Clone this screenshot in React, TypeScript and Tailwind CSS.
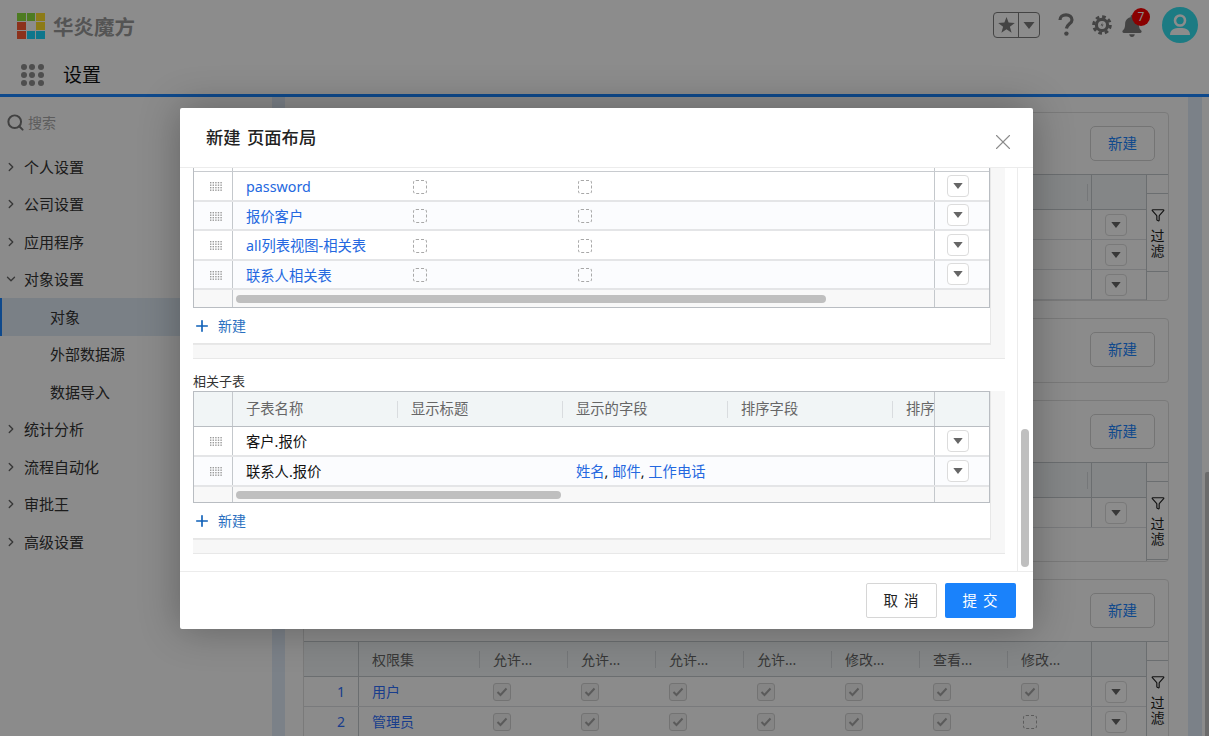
import { ChevronDown, ChevronRight, Funnel, Plus, Search, X } from "lucide-react"
import { FaBell } from "react-icons/fa"

const menu = [
  { label: "个人设置" },
  { label: "公司设置" },
  { label: "应用程序" },
  { label: "对象设置", open: true },
  { label: "对象", sub: true, active: true },
  { label: "外部数据源", sub: true },
  { label: "数据导入", sub: true },
  { label: "统计分析" },
  { label: "流程自动化" },
  { label: "审批王" },
  { label: "高级设置" },
]

const logoColors = [
  "#8ce03c", "#8ce03c", "#ffe02a",
  "#ff5b33", "#ffffff", "#ffe02a",
  "#ff5b33", "#18d8ff", "#18d8ff",
]

const permissionColumns = ["允许...", "允许...", "允许...", "允许...", "修改...", "查看...", "修改..."]

function Caret({ className = "" }: { className?: string }) {
  return (
    <svg width="12" height="7" viewBox="0 0 11 7" className={className}>
      <polygon points="0,0 11,0 5.5,7" fill="currentColor" />
    </svg>
  )
}

function RowMenu() {
  return (
    <div className="flex h-[22px] w-[22px] items-center justify-center rounded-[4px] border border-[#dcdcdc] bg-white text-[#666]">
      <Caret className="h-[6px] w-[10px]" />
    </div>
  )
}

function DashedBox() {
  return <div className="h-[14px] w-[14px] rounded-[3px] border border-dashed border-[#a8a8a8]" />
}

function CheckedBox() {
  return (
    <div className="flex h-[18px] w-[18px] items-center justify-center rounded-[3px] border border-[#d2d2d2] bg-[#f2f2f2]">
      <svg width="12" height="10" viewBox="0 0 12 10" fill="none" stroke="#a6a6a6" strokeWidth="2">
        <path d="M1.5 5 L4.5 8 L10.5 1.5" />
      </svg>
    </div>
  )
}

function DragHandle() {
  return (
    <svg width="12" height="9" viewBox="0 0 12 9" fill="#9a9a9a">
      {[0, 1, 2, 3].map((r) =>
        [0, 1, 2, 3, 4].map((c) => (
          <rect key={`${r}-${c}`} x={c * 2.6} y={r * 2.5} width="1.4" height="1.4" />
        )),
      )}
    </svg>
  )
}

function GearIcon() {
  return (
    <svg width="20" height="20" viewBox="0 0 20 20" fill="none">
      <circle cx="10" cy="10" r="8.3" stroke="#7c7c7c" strokeWidth="3" strokeDasharray="3.6 2.9" />
      <circle cx="10" cy="10" r="5.6" stroke="#7c7c7c" strokeWidth="3.2" />
      <path d="M10.8 7 L8.6 10.4 H10.4 L9.4 13 L11.6 9.6 H9.9 Z" fill="#7c7c7c" />
    </svg>
  )
}

function AvatarIcon() {
  return (
    <div className="flex h-[36px] w-[36px] items-center justify-center rounded-full bg-[#33e0ee]">
      <svg width="24" height="24" viewBox="0 0 24 24" fill="#ffffff">
        <circle cx="12" cy="7.5" r="5" fill="none" stroke="#ffffff" strokeWidth="2.6" />
        <path d="M2 22 C2 16.8 6 15 12 15 C18 15 22 16.8 22 22 Z" />
      </svg>
    </div>
  )
}

function TopBar() {
  return (
    <div className="flex h-[60px] shrink-0 items-start bg-white pl-[17px] pr-[11px] pt-[7px]">
      <div className="mt-[6px] grid h-[26px] w-[28px] grid-cols-3 grid-rows-3 gap-px">
        {logoColors.map((color, i) => (
          <div key={i} style={{ backgroundColor: color }} />
        ))}
      </div>
      <span className="ml-[8px] mt-[5px] text-[20.5px] leading-[30px] font-bold text-[#999]">华炎魔方</span>
      <div className="ml-auto mt-[5px] flex h-[26px] w-[47px] items-center rounded-[4px] border border-[#7c7c7c] text-[#7c7c7c]">
        <div className="flex h-full w-[25px] items-center justify-center border-r border-[#7c7c7c]">
          <svg width="17" height="16" viewBox="0 0 17 16" fill="currentColor">
            <polygon points="8.5,0 10.6,5.6 16.8,5.9 11.9,9.7 13.6,15.8 8.5,12.3 3.4,15.8 5.1,9.7 0.2,5.9 6.4,5.6" />
          </svg>
        </div>
        <div className="flex flex-1 items-center justify-center">
          <Caret />
        </div>
      </div>
      <svg width="18" height="24" viewBox="0 0 18 24" fill="none" className="ml-[17px] mt-[6px]">
        <path d="M3 7 C3 3.6 5.6 1.8 9 1.8 C12.4 1.8 15 3.8 15 7 C15 10.6 10 11 9.4 15.5" stroke="#7c7c7c" strokeWidth="3.2" />
        <circle cx="9.4" cy="20.6" r="2.2" fill="#7c7c7c" />
      </svg>
      <div className="ml-[17px] mt-[8px]">
        <GearIcon />
      </div>
      <div className="relative ml-[9px] mt-[8px] text-[#7c7c7c]">
        <FaBell size={22} />
        <div className="absolute left-[11px] top-[-7px] flex h-[18px] w-[18px] items-center justify-center rounded-full bg-[#fb0000] text-[12px] leading-none text-white">
          7
        </div>
      </div>
      <div className="ml-[19px]">
        <AvatarIcon />
      </div>
    </div>
  )
}

function SubBar() {
  return (
    <div className="flex h-[37px] shrink-0 items-center border-b-[3px] border-[#1a85ff] bg-white pb-[4px] pl-[21px]">
      <div className="grid w-[23px] grid-cols-3 gap-[2px]">
        {Array.from({ length: 9 }).map((_, i) => (
          <div key={i} className="h-[6px] w-[6px] rounded-full bg-[#8e8e8e]" />
        ))}
      </div>
      <span className="ml-[19px] text-[19px] leading-none text-[#111]">设置</span>
    </div>
  )
}

function Sidebar() {
  return (
    <div className="w-[272px] shrink-0 bg-[#fdfdfd]">
      <div className="flex h-[51px] items-center pl-[6px] text-[14px] text-[#aaa]">
        <Search size={19} strokeWidth={2.5} className="text-[#777]" />
        <span className="ml-[3px]">搜索</span>
      </div>
      {menu.map((item) => (
        <div
          key={item.label}
          className={`flex h-[37.5px] items-center text-[15px] text-[#333] ${
            item.active ? "border-l-2 border-[#1a85ff] bg-[#dfe9f5]" : ""
          } ${item.sub ? (item.active ? "pl-[48px]" : "pl-[50px]") : "pl-[4px]"}`}
        >
          {!item.sub &&
            (item.open ? (
              <ChevronDown size={14} strokeWidth={2.3} className="mr-[6px] text-[#666]" />
            ) : (
              <ChevronRight size={14} strokeWidth={2.3} className="mr-[6px] text-[#666]" />
            ))}
          {item.label}
        </div>
      ))}
    </div>
  )
}

function FilterColumn() {
  return (
    <div className="w-[22px] shrink-0 border-l border-[#c4c8cc]">
      <div className="h-[19px] border-b border-[#c4c8cc]" />
      <div className="flex h-[78px] flex-col items-center border-b border-[#c4c8cc] pt-[14px] text-[#222]">
        <Funnel size={14} className="mb-[6px]" />
        <div className="w-[14px] break-all text-[14px] leading-[15px]">过滤</div>
      </div>
    </div>
  )
}

function NewButton() {
  return (
    <div className="flex h-[61px] shrink-0 justify-end pr-[13px] pt-[13px]">
      <div className="flex h-[35px] w-[65px] items-center justify-center rounded-[5px] border border-[#d4d4d4] bg-white pt-px text-[14.5px] text-[#1a85ff]">
        新建
      </div>
    </div>
  )
}

function BlankTable({ rows, bodyHeight }: { rows: number; bodyHeight: string }) {
  return (
    <div className={`flex border-t border-[#c4c8cc] ${bodyHeight}`}>
      <div className="flex-1">
        <div className="flex h-[35px] border-b border-[#c4c8cc] bg-[#f1f5f6]">
          <div className="flex flex-1 items-center justify-end pr-[3px]">
            <div className="h-[17px] w-px bg-[#d6d9dc]" />
          </div>
          <div className="w-[55px] border-l border-[#c4c8cc]" />
        </div>
        {Array.from({ length: rows }).map((_, i) => (
          <div key={i} className="flex h-[30px] border-b border-[#dddfe2]">
            <div className="flex-1" />
            <div className="flex w-[55px] items-center border-l border-[#c4c8cc] pl-[13px]">
              <RowMenu />
            </div>
          </div>
        ))}
      </div>
      <FilterColumn />
    </div>
  )
}

function PermissionTable() {
  return (
    <div className="flex border-t border-[#c4c8cc]">
      <div className="min-w-0 flex-1">
        <div className="flex h-[35px] border-b border-[#c4c8cc] bg-[#f1f5f6] text-[14px] text-[#666]">
          <div className="w-[55px] shrink-0 border-r border-[#c4c8cc]" />
          <div className="flex min-w-0 flex-1 items-center overflow-hidden">
            <div className="flex w-[121px] shrink-0 items-center justify-between pl-[13px]">
              权限集
              <div className="h-[17px] w-px bg-[#d6d9dc]" />
            </div>
            {permissionColumns.map((col, i) => (
              <div key={i} className="flex w-[88px] shrink-0 items-center justify-between pl-[13px]">
                {col}
                {i < 6 && <div className="h-[17px] w-px bg-[#d6d9dc]" />}
              </div>
            ))}
          </div>
          <div className="w-[55px] shrink-0 border-l border-[#c4c8cc]" />
        </div>
        {["用户", "管理员"].map((name, r) => (
          <div key={name} className="flex h-[30px] border-b border-[#dddfe2] text-[14px]">
            <div className="flex w-[55px] shrink-0 items-center justify-end border-r border-[#c4c8cc] pr-[13px] text-[#2f70ff]">
              {r + 1}
            </div>
            <div className="flex min-w-0 flex-1 items-center overflow-hidden">
              <div className="w-[121px] shrink-0 pl-[13px] text-[#2f70ff]">{name}</div>
              {permissionColumns.map((_, i) => (
                <div key={i} className="flex w-[88px] shrink-0 pl-[13px]">
                  {r === 1 && i === 6 ? (
                    <div className="pl-[2px]">
                      <DashedBox />
                    </div>
                  ) : (
                    <CheckedBox />
                  )}
                </div>
              ))}
            </div>
            <div className="flex w-[55px] shrink-0 items-center border-l border-[#c4c8cc] pl-[13px]">
              <RowMenu />
            </div>
          </div>
        ))}
      </div>
      <FilterColumn />
    </div>
  )
}

function PageBehind() {
  return (
    <div className="flex min-h-0 flex-1">
      <Sidebar />
      <div className="w-[13px] shrink-0 bg-[#e0ebf8]" />
      <div className="flex min-w-0 flex-1 flex-col gap-[17px] overflow-hidden bg-[#fefefe] pl-[18px] pr-[19px] pt-[15px]">
        <div className="shrink-0 rounded-[4px] border border-[#dedede]">
          <NewButton />
          <BlankTable rows={3} bodyHeight="h-[126px]" />
        </div>
        <div className="h-[65px] shrink-0 rounded-[4px] border border-[#dedede]">
          <NewButton />
        </div>
        <div className="shrink-0 rounded-[4px] border border-[#dedede]">
          <NewButton />
          <BlankTable rows={1} bodyHeight="h-[99px]" />
        </div>
        <div className="shrink-0 rounded-[4px] border border-[#dedede]">
          <NewButton />
          <PermissionTable />
        </div>
      </div>
      <div className="w-[14px] shrink-0 bg-[#e0ebf8]" />
      <div className="flex w-[7px] shrink-0 justify-end bg-[#fefefe] pt-[375px]">
        <div className="h-[300px] w-[4px] rounded-l-[2px] bg-[#c3c3c3]" />
      </div>
    </div>
  )
}

const linkRows = ["password", "报价客户", "all列表视图-相关表", "联系人相关表"]
const childColumns = ["子表名称", "显示标题", "显示的字段", "排序字段", "排序"]

function TableRow({ even, height, children }: { even: boolean; height: string; children: React.ReactNode }) {
  return (
    <div className={`flex border-b-2 border-[#e4e5e7] ${height} ${even ? "bg-[#fbfcfe]" : "bg-white"}`}>
      <div className="flex w-[39px] shrink-0 items-start border-r border-[#c4c8cc] pl-[16px] pt-[10px]">
        <DragHandle />
      </div>
      <div className="flex min-w-0 flex-1 items-center overflow-hidden pt-[2px] text-[14.3px]">{children}</div>
      <div className="flex w-[55px] shrink-0 items-center border-l border-[#c4c8cc] pl-[12px]">
        <RowMenu />
      </div>
    </div>
  )
}

function ScrollRow({ thumb, height }: { thumb: string; height: string }) {
  return (
    <div className={`flex bg-[#f8f8f8] ${height}`}>
      <div className="w-[39px] shrink-0 border-r border-[#c4c8cc]" />
      <div className="flex flex-1 items-center pl-[3px]">
        <div className={`h-[8px] rounded-full bg-[#bfbfbf] ${thumb}`} />
      </div>
      <div className="w-[55px] shrink-0 border-l border-[#c4c8cc]" />
    </div>
  )
}

function AddRow() {
  return (
    <div className="flex h-[36px] items-center border-b border-[#e6e6e6] text-[14px] text-[#2a6fc0]">
      <Plus size={18} strokeWidth={2.2} className="text-[#0f60b8]" />
      <span className="ml-[7px]">新建</span>
    </div>
  )
}

function LayoutDialog() {
  return (
    <div className="absolute left-[180px] top-[108px] flex h-[521px] w-[853px] flex-col rounded-[2px] bg-white shadow-[0_0_40px_rgba(0,0,0,0.3)]">
      <div className="flex h-[60px] shrink-0 items-start justify-between border-b border-[#ececec] pl-[26px] pr-[17px]">
        <span className="mt-[16px] text-[17.3px] leading-[28px] font-medium text-[#222] [word-spacing:2px]">新建 页面布局</span>
        <X size={26} strokeWidth={1} className="mt-[21px] text-[#8c8c8c]" />
      </div>
      <div className="flex min-h-0 flex-1 overflow-hidden">
        <div className="w-[838px] shrink-0 border-r border-[#ececec] pl-[13px]">
          <div className="w-[812px] border-b border-[#e8e8e8] bg-[#f7f7f7]">
            <div className="w-[798px] border-b border-r border-[#e8e8e8] bg-white">
              <div className="border-b border-x border-[#b9bdc2]">
                <div className="flex h-[4px] border-b border-[#c8cbcf]">
                  <div className="w-[39px] border-r border-[#c4c8cc]" />
                  <div className="flex-1" />
                  <div className="w-[55px] border-l border-[#c4c8cc]" />
                </div>
                {linkRows.map((name, i) => (
                  <TableRow key={name} even={i % 2 === 1} height="h-[29.5px]">
                    <div className="w-[165px] shrink-0 truncate pl-[13px] text-[#2468e0]">{name}</div>
                    <div className="w-[165px] shrink-0 pl-[15px]">
                      <DashedBox />
                    </div>
                    <div className="w-[165px] shrink-0 pl-[15px]">
                      <DashedBox />
                    </div>
                  </TableRow>
                ))}
                <ScrollRow thumb="w-[590px]" height="h-[17px]" />
              </div>
              <AddRow />
            </div>
            <div className="h-[13px]" />
          </div>
          <div className="flex h-[32px] items-end pb-[2px] text-[13px] leading-[16px] text-[#333]">相关子表</div>
          <div className="w-[812px] border-b border-[#e8e8e8] bg-[#f7f7f7]">
            <div className="w-[798px] border-b border-r border-[#e8e8e8] bg-white">
              <div className="border border-[#b9bdc2]">
                <div className="flex h-[35px] border-b border-[#b9bdc2] bg-[#f1f5f6] text-[14.3px] text-[#666]">
                  <div className="w-[39px] shrink-0 border-r border-[#c4c8cc]" />
                  <div className="flex min-w-0 flex-1 items-center overflow-hidden">
                    {childColumns.map((col, i) => (
                      <div key={col} className="flex w-[165px] shrink-0 items-center justify-between pl-[13px]">
                        {col}
                        {i < 4 && <div className="h-[17px] w-px bg-[#d9dcdf]" />}
                      </div>
                    ))}
                  </div>
                  <div className="w-[55px] shrink-0 border-l border-[#c4c8cc]" />
                </div>
                <TableRow even={false} height="h-[30px]">
                  <div className="pl-[13px] text-[#111]">客户.报价</div>
                </TableRow>
                <TableRow even={true} height="h-[30px]">
                  <div className="w-[330px] shrink-0 pl-[13px] text-[#111]">联系人.报价</div>
                  <div className="pl-[13px] text-[#111]">
                    <span className="text-[#2468e0]">姓名</span>, <span className="text-[#2468e0]">邮件</span>,{" "}
                    <span className="text-[#2468e0]">工作电话</span>
                  </div>
                </TableRow>
                <ScrollRow thumb="w-[325px]" height="h-[15px]" />
              </div>
              <AddRow />
            </div>
            <div className="h-[13px]" />
          </div>
        </div>
        <div className="flex-1 pl-[3px] pt-[261px]">
          <div className="h-[138px] w-[8px] rounded-full bg-[#bfbfbf]" />
        </div>
      </div>
      <div className="flex h-[58px] shrink-0 items-start justify-end gap-[8px] border-t border-[#ececec] pr-[17px] pt-[11px] text-[14.5px]">
        <div className="flex h-[35px] w-[71px] items-center justify-center rounded-[2px] border border-[#d6d6d6] tracking-[1px] text-[#222]">
          取 消
        </div>
        <div className="flex h-[35px] w-[71px] items-center justify-center rounded-[2px] bg-[#1a82fb] tracking-[1px] text-white">
          提 交
        </div>
      </div>
    </div>
  )
}

export default function App() {
  return (
    <div className="relative flex h-[736px] w-full flex-col overflow-hidden font-['Noto_Sans','Noto_Sans_CJK_SC',sans-serif]">
      <TopBar />
      <SubBar />
      <PageBehind />
      <div className="absolute inset-0 bg-black/45" />
      <LayoutDialog />
    </div>
  )
}
